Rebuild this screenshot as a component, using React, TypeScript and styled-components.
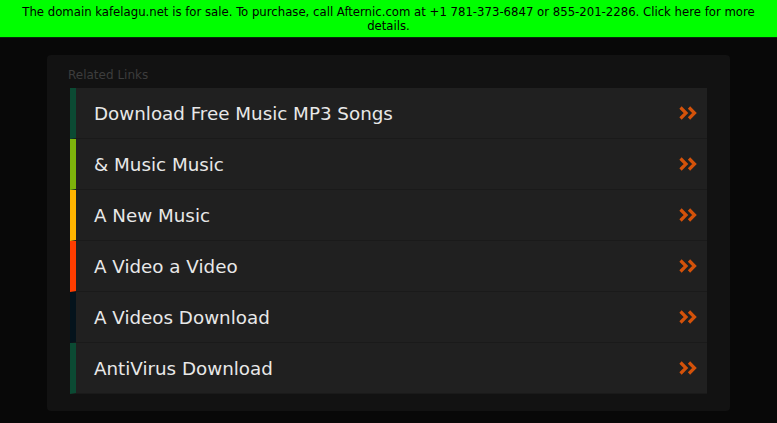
import React, { FC } from "react";
import styled, { createGlobalStyle } from "styled-components";

const GlobalStyle = createGlobalStyle`
  html, body {
    margin: 0;
    padding: 0;
    background: #080808;
  }
`;

const Page = styled.div`
  min-height: 423px;
  background: #080808;
  font-family: "DejaVu Sans", "Liberation Sans", sans-serif;
`;

const SaleBanner = styled.div`
  background: #00ff00;
  color: #000;
  text-align: center;
  font-family: "DejaVu Sans Condensed", "DejaVu Sans", sans-serif;
  font-size: 13px;
  line-height: 14px;
  padding: 5px 20px 4px;
  border-bottom: 1px solid #0a2a0a;
  cursor: pointer;
`;

const Panel = styled.div`
  margin: 17px 47px 0 47px;
  background: #121212;
  border-radius: 4px;
  padding: 11px 23px 17px 21px;
`;

const PanelTitle = styled.div`
  color: #3d3d3d;
  font-size: 12px;
  line-height: 18px;
  margin-bottom: 4px;
`;

const LinkList = styled.ul`
  list-style: none;
  margin: 0 0 0 2px;
  padding: 0;
`;

const LinkRow = styled.li<{ $accent: string }>`
  display: flex;
  align-items: center;
  height: 50px;
  background: #202020;
  border-left: 6px solid ${(p) => p.$accent};
  border-bottom: 1px solid #1a1a1a;
  padding: 0 10px 0 18px;
  cursor: pointer;
`;

const LinkText = styled.span`
  flex: 1;
  color: #e8e8e8;
  font-size: 18.3px;
`;

const Chevrons: FC = () => (
  <svg width="18" height="14" viewBox="0 0 18 14">
    <polyline points="1.5,1.5 7,7 1.5,12.5" fill="none" stroke="#d4520a" strokeWidth="3.2" />
    <polyline points="10,1.5 15.5,7 10,12.5" fill="none" stroke="#d4520a" strokeWidth="3.2" />
  </svg>
);

const links = [
  { title: "Download Free Music MP3 Songs", color: "#0b4a33" },
  { title: "& Music Music", color: "#7db30b" },
  { title: "A New Music", color: "#ffb400" },
  { title: "A Video a Video", color: "#ff3d00" },
  { title: "A Videos Download", color: "#04131c" },
  { title: "AntiVirus Download", color: "#0b4a33" },
];

const App: FC = () => {
  return (
    <Page>
      <GlobalStyle />
      <SaleBanner>
        The domain kafelagu.net is for sale. To purchase, call Afternic.com at +1 781-373-6847 or 855-201-2286. Click here for more details.
      </SaleBanner>
      <Panel>
        <PanelTitle>Related Links</PanelTitle>
        <LinkList>
          {links.map((item, index) => (
            <LinkRow key={index} $accent={item.color}>
              <LinkText>{item.title}</LinkText>
              <Chevrons />
            </LinkRow>
          ))}
        </LinkList>
      </Panel>
    </Page>
  );
};

export default App;
